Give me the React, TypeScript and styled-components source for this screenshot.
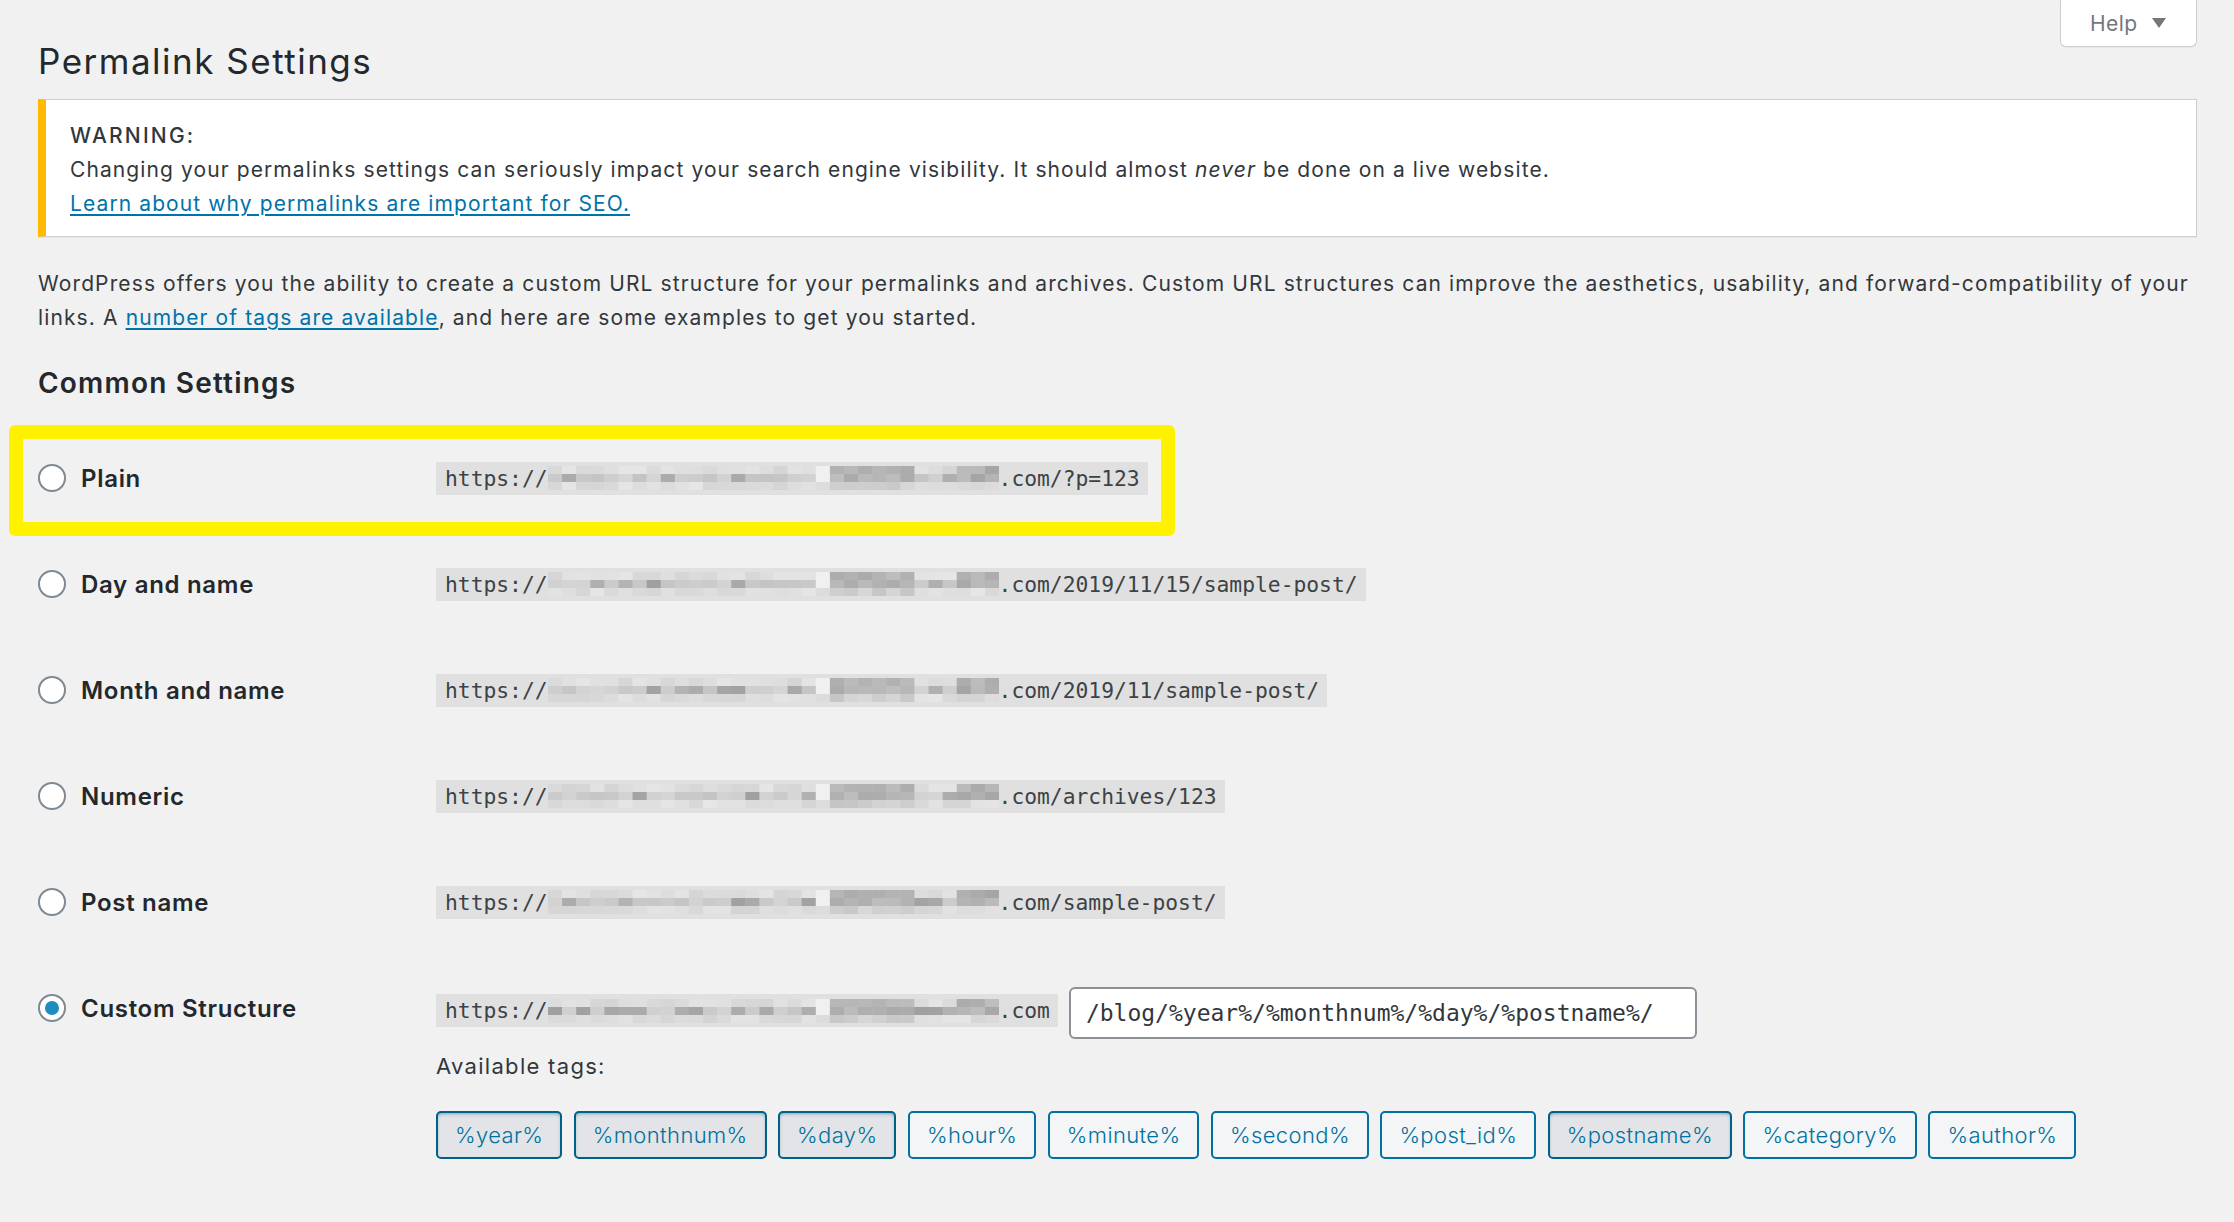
import styled, { createGlobalStyle } from 'styled-components'

const GlobalStyle = createGlobalStyle`
  html, body {
    margin: 0;
    padding: 0;
    background: #f1f1f1;
  }
  body {
    font-family: Inter, 'Noto Sans', sans-serif;
    color: #32373c;
  }
`

const permalinkRows = [
	{ label: 'Plain', suffix: '.com/?p=123', seed: 11 },
	{ label: 'Day and name', suffix: '.com/2019/11/15/sample-post/', seed: 23 },
	{ label: 'Month and name', suffix: '.com/2019/11/sample-post/', seed: 37 },
	{ label: 'Numeric', suffix: '.com/archives/123', seed: 41 },
	{ label: 'Post name', suffix: '.com/sample-post/', seed: 53 },
]

const availableTags = [
	{ name: '%year%', active: true },
	{ name: '%monthnum%', active: true },
	{ name: '%day%', active: true },
	{ name: '%hour%', active: false },
	{ name: '%minute%', active: false },
	{ name: '%second%', active: false },
	{ name: '%post_id%', active: false },
	{ name: '%postname%', active: true },
	{ name: '%category%', active: false },
	{ name: '%author%', active: false },
]

// pixelated (censored) domain name
function Mosaic({ seed }: { seed: number }) {
	let s = seed * 7919
	const rand = () => {
		s = (s * 9301 + 49297) % 233280
		return s / 233280
	}
	const cols = 32
	const cellW = 451 / cols
	const cells = []
	for (let r = 0; r < 3; r++) {
		for (let c = 0; c < cols; c++) {
			let v = Math.round((r === 1 ? 196 : 212) + rand() * 18)
			if (r === 1 && rand() > 0.72) v = 160 + Math.round(rand() * 20)
			if (c >= 20 && c <= 25) v = Math.round((r === 2 ? 196 : 170) + rand() * 20)
			if (c >= 29 && r < 2) v = Math.round(165 + rand() * 25)
			if (c === 19) v = r === 2 ? 220 : 240
			cells.push(
				<rect
					key={`${r}-${c}`}
					x={c * cellW}
					y={r * 8}
					width={cellW + 0.5}
					height={8.5}
					fill={`rgb(${v},${v},${v})`}
				/>,
			)
		}
	}
	return (
		<StyledMosaic width="451" height="24" viewBox="0 0 451 24">
			{cells}
		</StyledMosaic>
	)
}

function Url({ suffix, seed }: { suffix: string; seed: number }) {
	return (
		<StyledCode>
			https://
			<Mosaic seed={seed} />
			{suffix}
		</StyledCode>
	)
}

function App() {
	return (
		<StyledPage>
			<GlobalStyle />
			<StyledHelpTab>
				Help
				<svg width="14" height="10" viewBox="0 0 14 10">
					<path d="M0 0 H14 L7 10 Z" fill="#72777c" />
				</svg>
			</StyledHelpTab>
			<StyledTitle>Permalink Settings</StyledTitle>

			<StyledNotice>
				<StyledNoticeText>
					<StyledStrong>WARNING:</StyledStrong>
					<br />
					Changing your permalinks settings can seriously impact your search engine
					visibility. It should almost <em>never</em> be done on a live website.
					<br />
					<StyledLink href="#">Learn about why permalinks are important for SEO.</StyledLink>
				</StyledNoticeText>
			</StyledNotice>

			<StyledDescription>
				WordPress offers you the ability to create a custom URL structure for your
				permalinks and archives. Custom URL structures can improve the aesthetics,
				usability, and forward-compatibility of your links. A{' '}
				<StyledLink href="#">number of tags are available</StyledLink>, and here are
				some examples to get you started.
			</StyledDescription>

			<StyledHeading>Common Settings</StyledHeading>

			<StyledHighlight>
				<StyledRow $compact>
					<StyledLabel>
						<StyledRadio />
						{permalinkRows[0].label}
					</StyledLabel>
					<Url suffix={permalinkRows[0].suffix} seed={permalinkRows[0].seed} />
				</StyledRow>
			</StyledHighlight>

			<StyledRowList>
				{permalinkRows.slice(1).map((row) => (
					<StyledRow key={row.label}>
						<StyledLabel>
							<StyledRadio />
							{row.label}
						</StyledLabel>
						<Url suffix={row.suffix} seed={row.seed} />
					</StyledRow>
				))}
			</StyledRowList>

			<StyledCustomRow>
				<StyledLabel $tall>
					<StyledRadio $checked />
					Custom Structure
				</StyledLabel>
				<StyledCustomBody>
					<StyledCustomLine>
						<Url suffix=".com" seed={67} />
						<StyledInput
							type="text"
							defaultValue="/blog/%year%/%monthnum%/%day%/%postname%/"
						/>
					</StyledCustomLine>
					<StyledTagsCaption>Available tags:</StyledTagsCaption>
					<StyledTags>
						{availableTags.map((tag) => (
							<StyledTag key={tag.name} $active={tag.active}>
								{tag.name}
							</StyledTag>
						))}
					</StyledTags>
				</StyledCustomBody>
			</StyledCustomRow>
		</StyledPage>
	)
}

const StyledPage = styled.div`
  padding: 0 37px 60px 38px;
  min-height: 1222px;
  box-sizing: border-box;
`
const StyledHelpTab = styled.button`
  float: right;
  display: flex;
  align-items: center;
  gap: 15px;
  box-sizing: border-box;
  width: 137px;
  height: 47px;
  padding: 0 0 0 29px;
  background: #fff;
  border: 1px solid #ccd0d4;
  border-top: none;
  border-radius: 0 0 6px 6px;
  box-shadow: 0 1px 1px rgba(0, 0, 0, 0.04);
  color: #72777c;
  font-family: Inter, sans-serif;
  font-size: 21px;
  letter-spacing: 0.4px;
`
const StyledTitle = styled.h1`
  margin: 0;
  padding-top: 41px;
  font-size: 35px;
  font-weight: 400;
  line-height: 40px;
  letter-spacing: 1.5px;
  color: #23282d;
`
const StyledNotice = styled.div`
  clear: both;
  margin-top: 18px;
  background: #fff;
  border: 1px solid #ccd0d4;
  border-left: 8px solid #ffb900;
  box-shadow: 0 1px 1px rgba(0, 0, 0, 0.04);
  padding: 19px 24px 15px;
`
const StyledNoticeText = styled.p`
  margin: 0;
  font-size: 21px;
  line-height: 34px;
  letter-spacing: 1.1px;
  color: #32373c;
`
const StyledStrong = styled.span`
  font-weight: 500;
  letter-spacing: 2.2px;
`
const StyledLink = styled.a`
  color: #0073aa;
  text-decoration: underline;
  text-underline-offset: 3px;
`
const StyledDescription = styled.p`
  margin: 30px 0 0;
  font-size: 21px;
  line-height: 34px;
  letter-spacing: 1.12px;
`
const StyledHeading = styled.h2`
  margin: 30px 0 0;
  font-size: 28px;
  font-weight: 600;
  line-height: 36px;
  letter-spacing: 1.2px;
  color: #23282d;
`
const StyledHighlight = styled.div`
  box-sizing: border-box;
  width: 1166px;
  margin: 24px 0 0 -29px;
  padding: 0 0 5px 15px;
  border: 14px solid #fff200;
  border-radius: 6px;
`
const StyledRowList = styled.div`
  display: flex;
  flex-direction: column;
  gap: 16px;
  margin-top: 3px;
`
const StyledRow = styled.div<{ $compact?: boolean }>`
  display: flex;
  align-items: center;
  height: ${(props) => (props.$compact ? '78px' : '90px')};
`
const StyledLabel = styled.label<{ $tall?: boolean }>`
  display: flex;
  align-items: center;
  gap: 15px;
  flex-shrink: 0;
  width: 398px;
  height: ${(props) => (props.$tall ? '42px' : 'auto')};
  font-size: 24px;
  font-weight: 600;
  letter-spacing: 0.7px;
  color: #23282d;
`
const StyledRadio = styled.span<{ $checked?: boolean }>`
  display: flex;
  align-items: center;
  justify-content: center;
  box-sizing: border-box;
  width: 28px;
  height: 28px;
  border: 2px solid #7e8993;
  border-radius: 50%;
  background: #fff;

  &::after {
    content: '';
    display: ${(props) => (props.$checked ? 'block' : 'none')};
    width: 14px;
    height: 14px;
    border-radius: 50%;
    background: #1e8cbe;
  }
`
const StyledCode = styled.code`
  display: inline-flex;
  align-items: center;
  flex-shrink: 0;
  height: 33px;
  padding: 0 8px 0 9px;
  background: rgba(0, 0, 0, 0.07);
  font-family: 'DejaVu Sans Mono', 'Liberation Mono', monospace;
  font-size: 21.3px;
  color: #3c4246;
  white-space: nowrap;
`
const StyledMosaic = styled.svg`
  display: block;
  flex-shrink: 0;
`
const StyledCustomRow = styled.div`
  display: flex;
  align-items: flex-start;
  padding-top: 40px;
`
const StyledCustomBody = styled.div`
  display: flex;
  flex-direction: column;
  align-items: flex-start;
`
const StyledCustomLine = styled.div`
  display: flex;
  align-items: flex-start;
  gap: 11px;

  & > code {
    margin-top: 7px;
  }
`
const StyledInput = styled.input`
  box-sizing: border-box;
  width: 628px;
  height: 52px;
  padding: 0 15px;
  border: 2px solid #8c9197;
  border-radius: 6px;
  background: #fff;
  font-family: 'DejaVu Sans Mono', 'Liberation Mono', monospace;
  font-size: 23px;
  color: #32373c;
  outline: none;
`
const StyledTagsCaption = styled.p`
  margin: 10px 0 0;
  font-size: 22px;
  line-height: 34px;
  letter-spacing: 1.3px;
  color: #32373c;
`
const StyledTags = styled.div`
  display: flex;
  gap: 11.5px;
  margin-top: 28px;
`
const StyledTag = styled.button<{ $active: boolean }>`
  box-sizing: border-box;
  height: 48px;
  padding: 0 17px;
  border: 2px solid ${(props) => (props.$active ? '#016087' : '#0071a1')};
  border-radius: 5px;
  background: ${(props) => (props.$active ? '#e2e4e7' : '#f3f5f6')};
  box-shadow: ${(props) =>
		props.$active ? 'inset 0 2px 5px -3px #016087' : 'none'};
  color: #0071a1;
  font-family: Inter, sans-serif;
  font-size: 22px;
  font-weight: 300;
  letter-spacing: 0.38px;
  cursor: pointer;
`
export default App
